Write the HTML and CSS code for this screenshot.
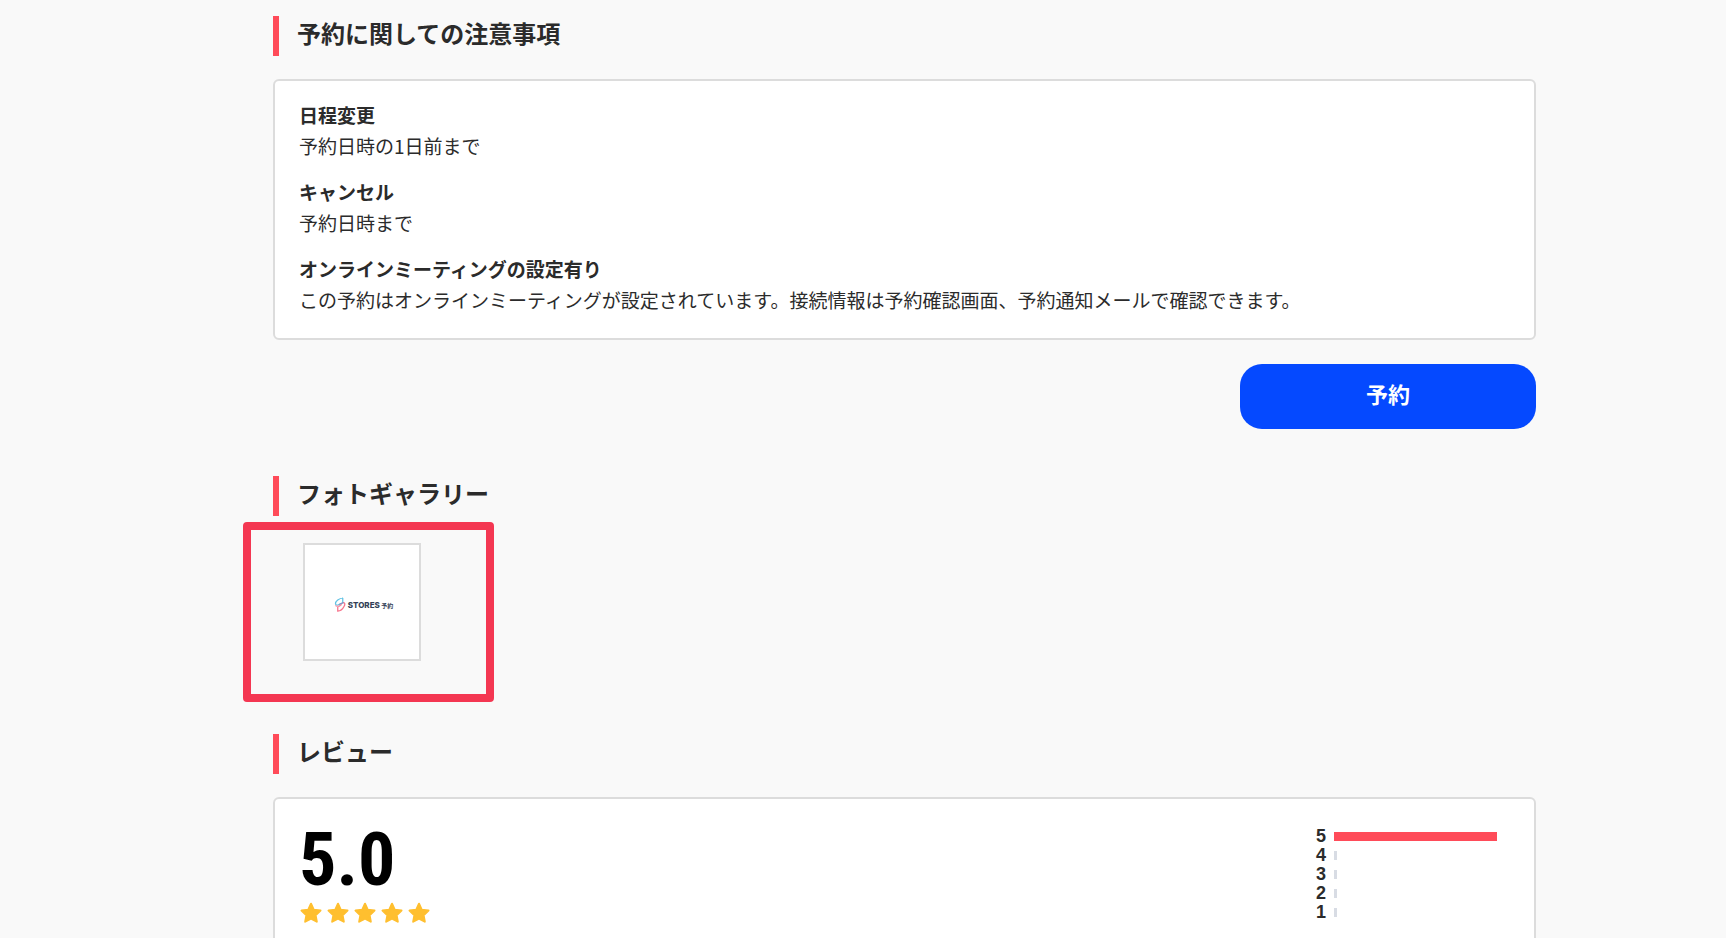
FILE: index.html
```html
<!DOCTYPE html>
<html lang="ja">
<head>
	<meta charset="UTF-8">
	<meta name="viewport" content="width=device-width, initial-scale=1.0">
	<title>予約</title>

	<link rel="stylesheet" href="styles.css">
</head>
<body>

	<svg width="0" height="0" class="sprite" aria-hidden="true">
		<symbol id="star" viewBox="0 0 24 24">
			<path d="M12 2.7l2.7 6 6.8 .9-4.9 4.6 1.2 6.5-5.8-3-5.8 3 1.2-6.5-4.9-4.6 6.8-.9z" fill="#ffbf2f" stroke="#ffbf2f" stroke-width="2" stroke-linejoin="round"/>
		</symbol>
	</svg>

	<main class="page">
		<section class="notes">
			<h2 class="heading">予約に関しての注意事項</h2>
			<dl class="card notes-list">
				<div>
					<dt>日程変更</dt>
					<dd>予約日時の1日前まで</dd>
				</div>
				<div>
					<dt>キャンセル</dt>
					<dd>予約日時まで</dd>
				</div>
				<div>
					<dt>オンラインミーティングの設定有り</dt>
					<dd>この予約はオンラインミーティングが設定されています。接続情報は予約確認画面、予約通知メールで確認できます。</dd>
				</div>
			</dl>
			<button type="button" class="reserve">予約</button>
		</section>

		<section class="gallery">
			<h2 class="heading">フォトギャラリー</h2>
			<div class="highlight">
				<a href="#" class="thumb" aria-label="STORES 予約">
					<svg class="logo" viewBox="0 0 240 60">
						<g fill="none" stroke-width="5" stroke-linecap="round">
							<path d="M36 4C20 5 6 17 6 27c0 6 8 7 14 3l15-7V4z" stroke="#62c3e4"/>
							<path d="M37 22c8 0 8 8 3 16C35 48 25 56 15 56V40l14-9" stroke="#f8718a"/>
							<path d="M22 29l14-6" stroke="#8b91c4"/>
							<path d="M7 34c2 6 10 4 17 1" stroke="#f8a5b4"/>
						</g>
						<text x="55" y="42" class="logo-name">STORES</text>
						<text x="189" y="42" class="logo-kind">予約</text>
					</svg>
				</a>
			</div>
		</section>

		<section class="review">
			<h2 class="heading">レビュー</h2>
			<div class="card review-card">
				<div class="score">
					<p class="score-number">5.0</p>
					<div class="stars" role="img" aria-label="星5つ">
						<svg><use href="#star"/></svg>
						<svg><use href="#star"/></svg>
						<svg><use href="#star"/></svg>
						<svg><use href="#star"/></svg>
						<svg><use href="#star"/></svg>
					</div>
				</div>
				<ul class="chart">
					<li>5 <span class="track"><span class="bar" style="width: 100%"></span></span></li>
					<li>4 <span class="track"><span class="bar empty"></span></span></li>
					<li>3 <span class="track"><span class="bar empty"></span></span></li>
					<li>2 <span class="track"><span class="bar empty"></span></span></li>
					<li>1 <span class="track"><span class="bar empty"></span></span></li>
				</ul>
			</div>
		</section>
	</main>

</body>
</html>
```
FILE: styles.css
```css
* {
	margin: 0;
	padding: 0;
	box-sizing: border-box;
}

body {
	background-color: #f9f9f9;
	color: #2b2b2b;
	font-family: "Noto Sans CJK JP", sans-serif;
	font-size: 19px;
	line-height: 31px;
}

.sprite {
	position: absolute;
}

.page {
	padding: 16px 190px 24px 273px;
}

.heading {
	border-left: 6px solid #ff4b59;
	padding: 0 0 7px 18px;
	font-size: 24px;
	line-height: 33px;
}

.card {
	background-color: #fff;
	border: 2px solid #dcdcdc;
	border-radius: 6px;
	margin-top: 23px;
	padding: 18px 24px 23px;
}

/* 注意事項 */
.notes {
	display: flex;
	flex-direction: column;
}

.notes-list {
	display: flex;
	flex-direction: column;
	gap: 15px;
}

.notes-list dt {
	font-weight: bold;
}

.reserve {
	align-self: flex-end;
	width: 296px;
	height: 65px;
	margin-top: 24px;
	padding-bottom: 8px;
	border: 0;
	border-radius: 22px;
	background-color: #0549ff;
	color: #fff;
	font-family: inherit;
	font-size: 22px;
	font-weight: bold;
	cursor: pointer;
}

/* フォトギャラリー */
.gallery {
	margin-top: 47px;
}

.highlight {
	width: fit-content;
	margin: 6px 0 0 -30px;
	padding: 13px 65px 33px 52px;
	border: 8px solid #f43752;
	border-radius: 4px;
}

.thumb {
	display: flex;
	align-items: center;
	justify-content: center;
	width: 118px;
	height: 118px;
	padding: 4px 0 0 4px;
	border: 2px solid #dcdcdc;
	background-color: #fff;
}

.logo {
	width: 60px;
	height: 15px;
}

.logo-name {
	fill: #333f57;
	font-family: Inter, sans-serif;
	font-size: 32px;
	font-weight: 800;
}

.logo-kind {
	fill: #333f57;
	font-size: 24px;
	font-weight: bold;
}

/* レビュー */
.review {
	margin-top: 32px;
}

.review-card {
	display: flex;
	justify-content: space-between;
	padding: 28px 37px 20px 24px;
}

.score-number {
	color: #000;
	font-family: "Roboto Condensed", sans-serif;
	font-size: 74px;
	font-weight: bold;
	line-height: 66px;
}

.stars {
	display: flex;
	gap: 3px;
	margin-top: 8px;
}

.stars svg {
	width: 24px;
	height: 24px;
}

.chart {
	list-style: none;
	font-family: "Liberation Sans", sans-serif;
	font-size: 18px;
	font-weight: bold;
	line-height: 19px;
}

.chart li {
	display: flex;
	align-items: center;
	gap: 8px;
}

.track {
	width: 163px;
}

.bar {
	display: block;
	height: 9px;
	background-color: #ff4b59;
}

.empty {
	width: 3px;
	background-color: #d8dce4;
}
```
